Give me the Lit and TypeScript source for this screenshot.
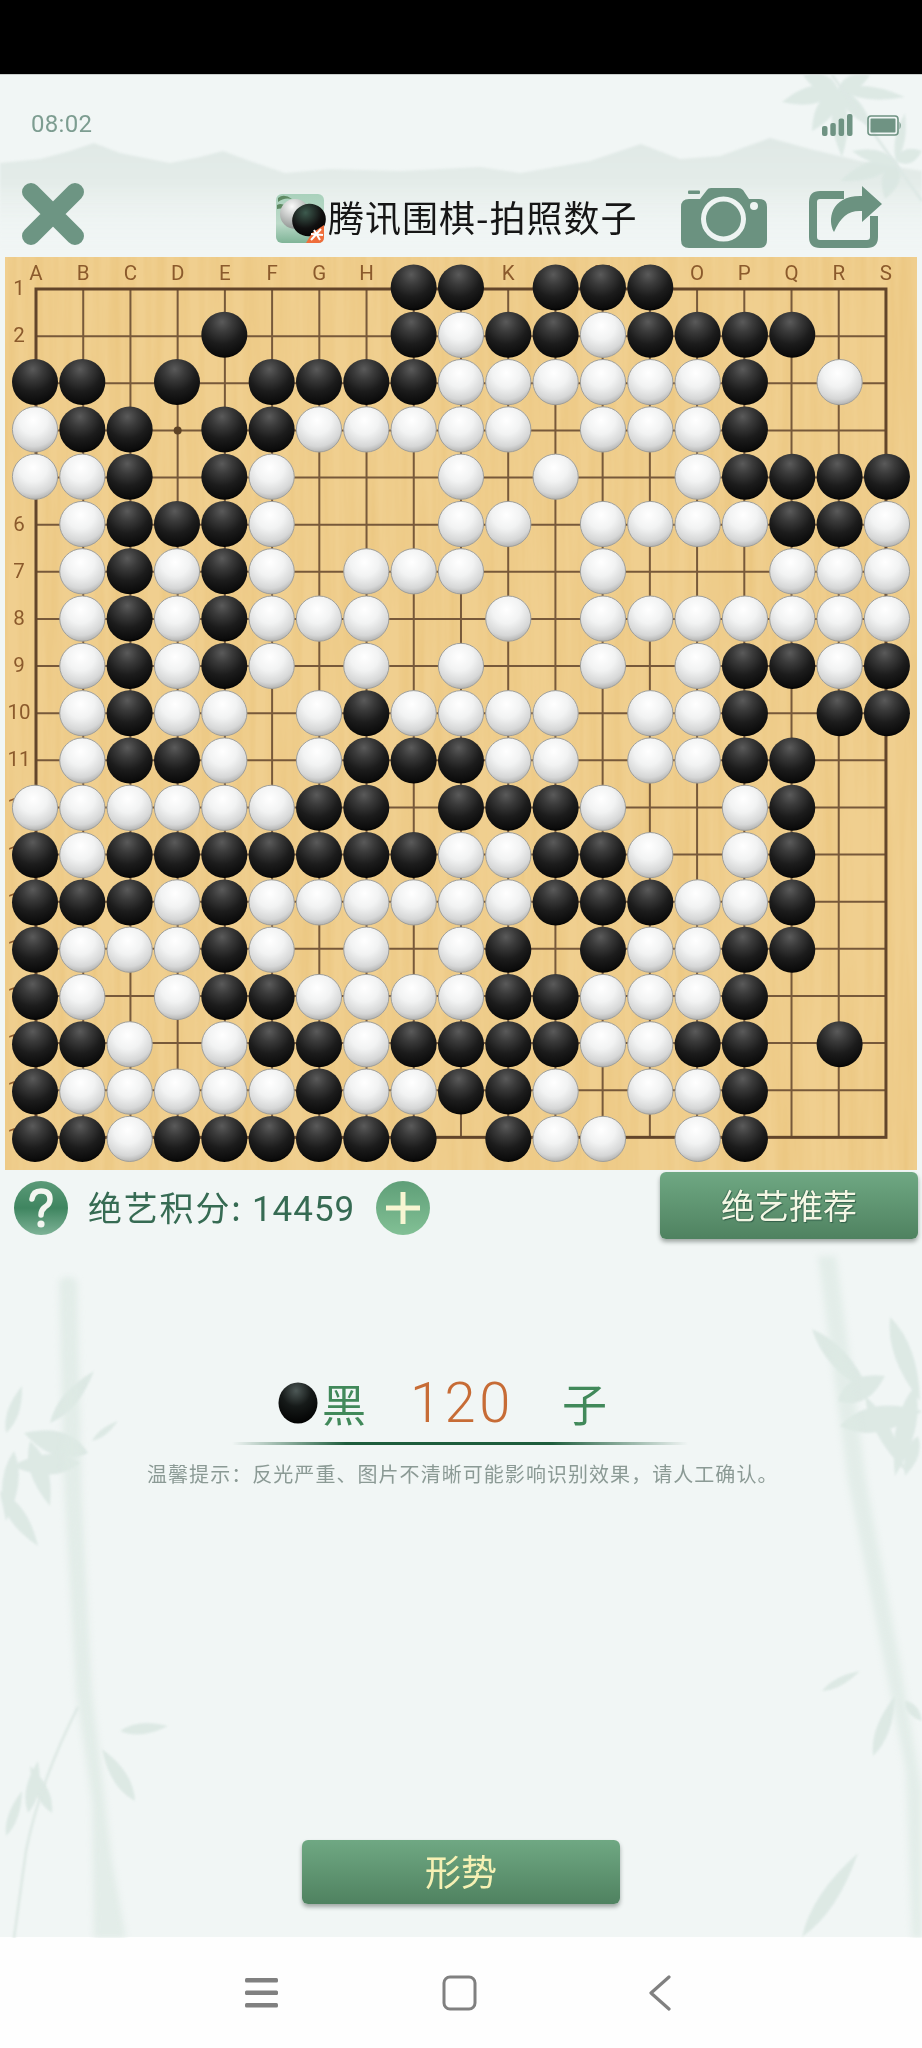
import { LitElement, html, css, svg } from "lit";
import { customElement } from "lit/decorators.js";

const ROWS = [
  "........bb.bbb.....",
  "....b...bwbbwbbbb..",
  "bb.b.bbbbwwwwwwb.w.",
  "wbb.bbwwwww.wwwb...",
  "wwb.bw...w.w..wbbbb",
  ".wbbbw...ww.wwwwbbw",
  ".wbwbw.www..w...www",
  ".wbwbwww..w.wwwwwww",
  ".wbwbw.w.w..w.wbbwb",
  ".wbww.wbwwww.wwb.bb",
  ".wbbw.wbbbww.wwbb..",
  "wwwwwwbb.bbbw..wb..",
  "bwbbbbbbbwwbbw.wb..",
  "bbbwbwwwwwwbbbwwb..",
  "bwwwbw.w.wb.bwwbb..",
  "bw.wbbwwwwbbwwwb...",
  "bbw.wbbwbbbbwwbb.b.",
  "bwwwwwbwwbbw.wwb...",
  "bbwbbbbbb.bww.wb...",
];
const LETTERS = "ABCDEFGHIJKLMNOPQRS".split("");
const gx = (i: number) => 36 + i * 47.22;
const gy = (i: number) => 289 + i * 47.13;
const sx = (i: number) => 35 + i * 47.33;
const sy = (i: number) => 287.5 + i * 47.3;

// [baseX, baseY, tipX, tipY, halfWidth]
const LEAVES: number[][] = [
  [50, 1422, 94, 1370, 9], [6, 1432, 22, 1385, 7], [88, 1452, 24, 1432, 15], [80, 1462, 12, 1465, 13],
  [30, 1440, 50, 1505, 11], [14, 1450, 6, 1520, 10], [0, 1490, 38, 1545, 10], [92, 1440, 118, 1420, 4],
  [28, 1812, 38, 1760, 8], [52, 1812, 30, 1765, 8], [135, 1800, 102, 1748, 9], [6, 1835, 22, 1790, 6],
  [120, 1730, 168, 1725, 7],
  [812, 1328, 872, 1395, 11], [890, 1316, 920, 1400, 11], [838, 1400, 885, 1375, 14], [840, 1425, 922, 1410, 16],
  [865, 1395, 905, 1470, 9], [915, 1385, 895, 1475, 12], [918, 1435, 905, 1475, 8],
  [873, 1755, 895, 1695, 8], [905, 1700, 922, 1720, 6], [822, 1690, 860, 1670, 5],
  [802, 1936, 858, 1852, 10],
  // top right cluster
  [838, 88, 782, 101, 11], [838, 88, 803, 74, 10], [838, 88, 812, 130, 11], [838, 88, 842, 156, 10],
  [838, 88, 870, 74, 9], [838, 88, 905, 96, 8], [838, 88, 872, 126, 9],
  [896, 160, 840, 180, 10], [896, 160, 852, 150, 8], [896, 160, 885, 198, 11], [896, 160, 922, 150, 9], [896, 160, 905, 112, 6],
];
const leafPath = (l: number[]) => {
  const [x1, y1, x2, y2, w] = l;
  const dx = x2 - x1, dy = y2 - y1, len = Math.hypot(dx, dy);
  const nx = (-dy / len) * w * 1.6, ny = (dx / len) * w * 1.6;
  const mx = x1 + dx * 0.4, my = y1 + dy * 0.4;
  return `M${x1} ${y1}Q${mx + nx} ${my + ny} ${x2} ${y2}Q${mx - nx} ${my - ny} ${x1} ${y1}Z`;
};

@customElement("app-root")
export class AppRoot extends LitElement {
  static styles = css`
    :host {
      display: block;
      width: 922px;
      height: 2048px;
      overflow: hidden;
      font-family: "Noto Sans CJK SC", Roboto, sans-serif;
      background: #000;
    }
    .top { height: 74px; background: #000; }
    .page {
      position: relative;
      height: 1863px;
      box-sizing: border-box;
      border-top: 1px solid #c9cecc;
      background: #f1f6f5;
      display: flex;
      flex-direction: column;
    }
    .deco { position: absolute; left: 0; top: 0; width: 922px; height: 1863px; pointer-events: none; }
    .soft { filter: blur(1.2px); }
    .softer { filter: blur(3px); }
    .page > *:not(.deco) { position: relative; }
    .status {
      height: 108px;
      display: flex;
      justify-content: space-between;
      align-items: flex-start;
      box-sizing: border-box;
      padding: 37px 20px 0 31px;
    }
    .time { font: 400 24px/24px Roboto, sans-serif; color: #7d9d91; letter-spacing: 0.3px; }
    .sys { display: flex; gap: 14px; align-items: center; margin-top: 2px; }
    .hdr { display: flex; height: 64px; align-items: flex-start; }
    .close { margin-left: 22px; width: 62px; height: 62px; display: block; }
    .titlewrap { margin-left: 192px; width: 360px; display: flex; align-items: center; margin-top: 11px; }
    .logo { width: 50px; height: 50px; display: block; flex: none; }
    .title {
      margin: 0 0 6px 2px;
      font-size: 36px;
      line-height: 44px;
      color: #161616;
      white-space: nowrap;
      letter-spacing: 1px;
    }
    .cam { margin-left: 45px; width: 86px; height: 61px; display: block; margin-top: 4px; }
    .share { margin-left: 42px; width: 73px; height: 62px; display: block; margin-top: 3px; }
    .board { margin: 10px 0 0 5px; width: 912px; height: 913px; display: block; }
    .lab { font: 400 20.5px Roboto, sans-serif; fill: #8b5a2c; text-anchor: middle; dominant-baseline: central; }
    .score { display: flex; align-items: flex-start; height: 100px; padding-left: 14px; }
    .help { width: 54px; height: 54px; display: block; margin-top: 11px; flex: none; }
    .pts {
      margin: 13px 0 0 20px;
      width: 268px;
      font-size: 34px;
      line-height: 48px;
      color: #366b53;
      letter-spacing: 1.8px;
      white-space: nowrap;
    }
    .pts b { font: 400 35px/48px Roboto, sans-serif; letter-spacing: 1px; }
    .plus { width: 54px; height: 54px; display: block; margin: 11px 0 0 20px; flex: none; }
    .btn {
      display: flex;
      align-items: center;
      justify-content: center;
      box-sizing: border-box;
      border-radius: 6px;
      background: linear-gradient(#6fa883, #4f8260);
      box-shadow: 0 3px 4px rgba(60, 70, 65, 0.45);
    }
    .rec {
      margin: 2px 0 0 230px;
      width: 258px;
      height: 67px;
      flex: none;
      padding-bottom: 2px;
      font-size: 34px;
      color: #f4f7e4;
      text-shadow: 1px 1px 1px #33604a, -1px 0 1px #3f6f57;
    }
    .count { display: flex; align-items: center; height: 48px; margin-top: 109px; padding-left: 278px; }
    .bstone { width: 40px; height: 44px; display: block; flex: none; }
    .hei { margin-left: 4px; font-size: 44px; line-height: 48px; color: #41895a; width: 88px; }
    .num { font: 300 56px/48px Roboto, sans-serif; color: #c76c36; letter-spacing: 3.5px; width: 152px; }
    .zi { font-size: 45px; line-height: 48px; color: #41895a; }
    .rule {
      margin: 15px 0 0 232px;
      width: 456px;
      height: 3px;
      background: linear-gradient(90deg, rgba(26, 90, 58, 0), #1d5d3c 25%, #1d5d3c 70%, rgba(26, 90, 58, 0));
    }
    .hint {
      margin: 14px 0 0 147px;
      font-size: 20px;
      line-height: 30px;
      letter-spacing: 1.05px;
      color: #8b9a95;
      white-space: nowrap;
    }
    .form {
      margin: auto auto 33px;
      width: 318px;
      height: 64px;
      padding-bottom: 5px;
      font-size: 36px;
      color: #f6f1b4;
    }
    .nav {
      height: 111px;
      background: #fefefe;
      display: flex;
      align-items: center;
      padding: 0 0 0 245px;
      box-sizing: border-box;
    }
    .nav svg { display: block; }
    .menu { width: 33px; height: 33px; }
    .home { width: 36px; height: 36px; margin-left: 164px; }
    .back { width: 24px; height: 36px; margin-left: 170px; }
  `;

  private deco() {
    return html`<svg class="deco" viewBox="0 74 922 1863" aria-hidden="true">
      <defs>
        <linearGradient id="mt" x1="0" y1="0" x2="0" y2="1">
          <stop offset="0" stop-color="#e0e9e6"></stop>
          <stop offset="0.4" stop-color="#e4ece9"></stop>
          <stop offset="1" stop-color="#f1f6f5" stop-opacity="0"></stop>
        </linearGradient>
      </defs>
      <path class="soft" fill="url(#mt)" d="M0 162 L40 158 L70 150 L94 142 L120 152 L170 162 L200 156 L223 150 L250 160 L285 172 L330 168 L400 170 L480 166 L520 172 L590 160 L641 143 L680 158 L720 155 L770 137 L810 148 L860 160 L922 170 V250 H0 Z"></path>
      <g class="soft" fill="#dae7e2" opacity="0.85">
        ${LEAVES.map((l) => svg`<path d=${leafPath(l)}></path>`)}
      </g>
      <g class="softer" fill="#dde9e4">
        <path d="M59 1280 Q68 1272 77 1280 L82 1500 L92 1690 L112 1860 L126 1937 H94 L92 1800 L76 1690 L64 1480 Z" opacity="0.75"></path>
        <path d="M818 1255 L836 1255 L866 1480 L898 1650 L922 1790 V1937 H912 L906 1770 L880 1640 L848 1480 Z" opacity="0.7"></path>
      </g>
      <g class="soft" fill="none" stroke="#dde8e4">
        <path stroke-width="2.5" d="M78 1706 Q40 1780 26 1850 L14 1937"></path>
        <path stroke-width="2.5" d="M832 74 L922 200"></path>
      </g>
    </svg>`;
  }

  private board() {
    const hs = Array.from({ length: 19 }, (_, i) => i);
    return html`<svg class="board" viewBox="5 257 912 913" role="img">
      <defs>
        <filter id="grain" x="0" y="0" width="100%" height="100%">
          <feTurbulence type="fractalNoise" baseFrequency="0.09 0.004" numOctaves="3" seed="7"></feTurbulence>
          <feColorMatrix type="matrix" values="0 0 0 0 0.82  0 0 0 0 0.55  0 0 0 0 0.2  1.25 0 0 0 -0.42"></feColorMatrix>
        </filter>
        <radialGradient id="bs" cx="0.45" cy="0.22" r="0.8">
          <stop offset="0" stop-color="#5a5a5a"></stop>
          <stop offset="0.28" stop-color="#3a3a3a"></stop>
          <stop offset="0.6" stop-color="#1c1c1c"></stop>
          <stop offset="0.9" stop-color="#0c0c0c"></stop>
          <stop offset="1" stop-color="#000"></stop>
        </radialGradient>
        <radialGradient id="ws" cx="0.46" cy="0.3" r="0.74">
          <stop offset="0" stop-color="#ffffff"></stop>
          <stop offset="0.42" stop-color="#f2f3f3"></stop>
          <stop offset="0.78" stop-color="#d6d7d7"></stop>
          <stop offset="1" stop-color="#a9a9a7"></stop>
        </radialGradient>
      </defs>
      <rect x="5" y="257" width="912" height="913" fill="#f0cf8f"></rect>
      <rect x="5" y="257" width="912" height="913" filter="url(#grain)"></rect>
      <g stroke="#77593a" stroke-width="2">
        ${hs.slice(1, 18).map((i) => svg`<line x1=${gx(i)} y1=${gy(0)} x2=${gx(i)} y2=${gy(18)}></line>`)}
        ${hs.slice(1, 18).map((i) => svg`<line x1=${gx(0)} y1=${gy(i)} x2=${gx(18)} y2=${gy(i)}></line>`)}
      </g>
      <rect x=${gx(0)} y=${gy(0)} width=${gx(18) - gx(0)} height=${gy(18) - gy(0)} fill="none" stroke="#62452a" stroke-width="3"></rect>
      <circle cx=${gx(3)} cy=${gy(3)} r="4" fill="#5e4326"></circle>
      ${LETTERS.map((c, i) => svg`<text class="lab" x=${gx(i)} y="273">${c}</text>`)}
      ${hs.map((i) => svg`<text class="lab" x="19" y=${gy(i) - 1}>${i + 1}</text>`)}
      ${ROWS.map((row, r) =>
        row.split("").map((c, i) =>
          c === "."
            ? null
            : svg`<circle cx=${sx(i)} cy=${sy(r)} r=${c === "b" ? 23 : 22.6} fill=${c === "b" ? "url(#bs)" : "url(#ws)"} stroke=${c === "b" ? "none" : "#9f9f9b"} stroke-width="1"></circle>`
        )
      )}
    </svg>`;
  }

  render() {
    return html`
      <div class="top"></div>
      <div class="page">
        ${this.deco()}
        <div class="status">
          <span class="time">08:02</span>
          <div class="sys">
            <svg width="31" height="22" viewBox="0 0 31 22" fill="#6f9383">
              <rect x="0" y="12" width="5.5" height="10" rx="2"></rect>
              <rect x="8.3" y="9" width="5.5" height="13" rx="2"></rect>
              <rect x="16.6" y="4.5" width="5.5" height="17.5" rx="2"></rect>
              <rect x="25" y="0" width="5.5" height="22" rx="2"></rect>
            </svg>
            <svg width="35" height="21" viewBox="0 0 35 21">
              <rect x="1" y="1" width="30" height="19" rx="3" fill="none" stroke="#6f9383" stroke-width="1.6"></rect>
              <rect x="3.5" y="3.5" width="25" height="14" rx="1" fill="#6f9383"></rect>
              <path d="M32.5 6.5 Q35 10.5 32.5 14.5 Z" fill="#6f9383"></path>
            </svg>
          </div>
        </div>
        <div class="hdr">
          <svg class="close" viewBox="0 0 62 62">
            <path d="M9 9 L53 53 M53 9 L9 53" stroke="#6d9583" stroke-width="18" stroke-linecap="round"></path>
          </svg>
          <div class="titlewrap">
            <svg class="logo" viewBox="0 0 50 50">
              <defs>
                <linearGradient id="lg" x1="0" y1="0" x2="0" y2="1"><stop offset="0" stop-color="#a9d1bc"></stop><stop offset="0.6" stop-color="#bcdac9"></stop><stop offset="1" stop-color="#7fb497"></stop></linearGradient>
                <radialGradient id="lw" cx="0.4" cy="0.25" r="0.8"><stop offset="0" stop-color="#fafafa"></stop><stop offset="1" stop-color="#8a8f8c"></stop></radialGradient>
                <radialGradient id="lb" cx="0.5" cy="0.25" r="0.8"><stop offset="0" stop-color="#3d5a4e"></stop><stop offset="0.6" stop-color="#111"></stop><stop offset="1" stop-color="#000"></stop></radialGradient>
              </defs>
              <rect x="0" y="0" width="48" height="49" rx="6" fill="url(#lg)"></rect>
              <path d="M2 4 Q8 -1 16 5 Q8 3 2 8 Z M1 11 Q8 7 14 18 Q7 13 1 15 Z" fill="#5e8a63"></path>
              <circle cx="19" cy="20" r="15" fill="url(#lw)"></circle>
              <ellipse cx="33" cy="26" rx="17" ry="16" transform="rotate(-25 33 26)" fill="url(#lb)"></ellipse>
              <path d="M30 49 L36 39 L48 31 V43 Q48 49 42 49 Z" fill="#ef6d3a"></path>
              <path d="M38 36 L44 46 M45 35 L35 46 M35 40 L47 41" stroke="#fff" stroke-width="2" fill="none"></path>
            </svg>
            <span class="title">腾讯围棋-拍照数子</span>
          </div>
          <svg class="cam" viewBox="0 0 86 61">
            <rect x="7" y="3.5" width="12" height="3.5" rx="1" fill="#6b9280"></rect>
            <path d="M8 12 H19 L26 3 Q27 1 30 1 H57 Q60 1 62 3 L68 12 H78 Q86 12 86 20 V53 Q86 61 78 61 H8 Q0 61 0 53 V20 Q0 12 8 12 Z" fill="#6b9280"></path>
            <circle cx="42.5" cy="32" r="20" fill="#6b9280" stroke="#eef4f2" stroke-width="5"></circle>
            <circle cx="73" cy="19" r="4" fill="#eef4f2"></circle>
          </svg>
          <svg class="share" viewBox="0 0 73 62">
            <path d="M35 9 H11 Q4 9 4 16 V51 Q4 58 11 58 H58 Q65 58 65 51 V30" fill="none" stroke="#6b9280" stroke-width="8"></path>
            <path d="M53 0 L73 18 L53 36 V25 C40 24 32 30 25 46 C18 34 22 9 53 10 Z" fill="#6b9280"></path>
          </svg>
        </div>
        ${this.board()}
        <div class="score">
          <svg class="help" viewBox="0 0 54 54">
            <defs><linearGradient id="hg" x1="0" y1="0" x2="0" y2="1"><stop offset="0" stop-color="#5b9a78"></stop><stop offset="0.5" stop-color="#3f8560"></stop><stop offset="1" stop-color="#7eb397"></stop></linearGradient></defs>
            <circle cx="27" cy="27" r="27" fill="url(#hg)"></circle>
            <path d="M18 18 Q19 10 27 10 Q36 10 36 18 Q36 23 31 26 Q27 29 27 34" fill="none" stroke="#f3f6f0" stroke-width="5.5" stroke-linecap="round"></path>
            <circle cx="27" cy="43" r="3.6" fill="#f3f6f0"></circle>
          </svg>
          <span class="pts">绝艺积分: <b>14459</b></span>
          <svg class="plus" viewBox="0 0 54 54">
            <defs><linearGradient id="pg" x1="0" y1="0" x2="0" y2="1"><stop offset="0" stop-color="#5f9f78"></stop><stop offset="1" stop-color="#82c095"></stop></linearGradient></defs>
            <circle cx="27" cy="27" r="27" fill="url(#pg)"></circle>
            <path d="M27 11 V43 M10 27 H44" stroke="#f8f6d2" stroke-width="5"></path>
          </svg>
          <div class="btn rec">绝艺推荐</div>
        </div>
        <div class="count">
          <svg class="bstone" viewBox="0 0 40 44">
            <defs><radialGradient id="cs" cx="0.45" cy="0.2" r="0.85"><stop offset="0" stop-color="#4d5856"></stop><stop offset="0.45" stop-color="#161a19"></stop><stop offset="1" stop-color="#000"></stop></radialGradient></defs>
            <ellipse cx="20" cy="22" rx="19.5" ry="20.5" fill="url(#cs)"></ellipse>
          </svg>
          <span class="hei">黑</span>
          <span class="num">120</span>
          <span class="zi">子</span>
        </div>
        <div class="rule"></div>
        <div class="hint">温馨提示：反光严重、图片不清晰可能影响识别效果，请人工确认。</div>
        <div class="btn form">形势</div>
      </div>
      <div class="nav">
        <svg class="menu" viewBox="0 0 33 33" fill="#808080">
          <rect x="0" y="2" width="33" height="4.5" rx="1.5"></rect>
          <rect x="0" y="14.5" width="33" height="4.5" rx="1.5"></rect>
          <rect x="0" y="27" width="33" height="4.5" rx="1.5"></rect>
        </svg>
        <svg class="home" viewBox="0 0 36 36">
          <rect x="2" y="2" width="31" height="32" rx="6" fill="none" stroke="#808080" stroke-width="3"></rect>
        </svg>
        <svg class="back" viewBox="0 0 24 36">
          <path d="M21 2 L3 18 L21 34" fill="none" stroke="#808080" stroke-width="3.2" stroke-linecap="round" stroke-linejoin="round"></path>
        </svg>
      </div>
    `;
  }
}
